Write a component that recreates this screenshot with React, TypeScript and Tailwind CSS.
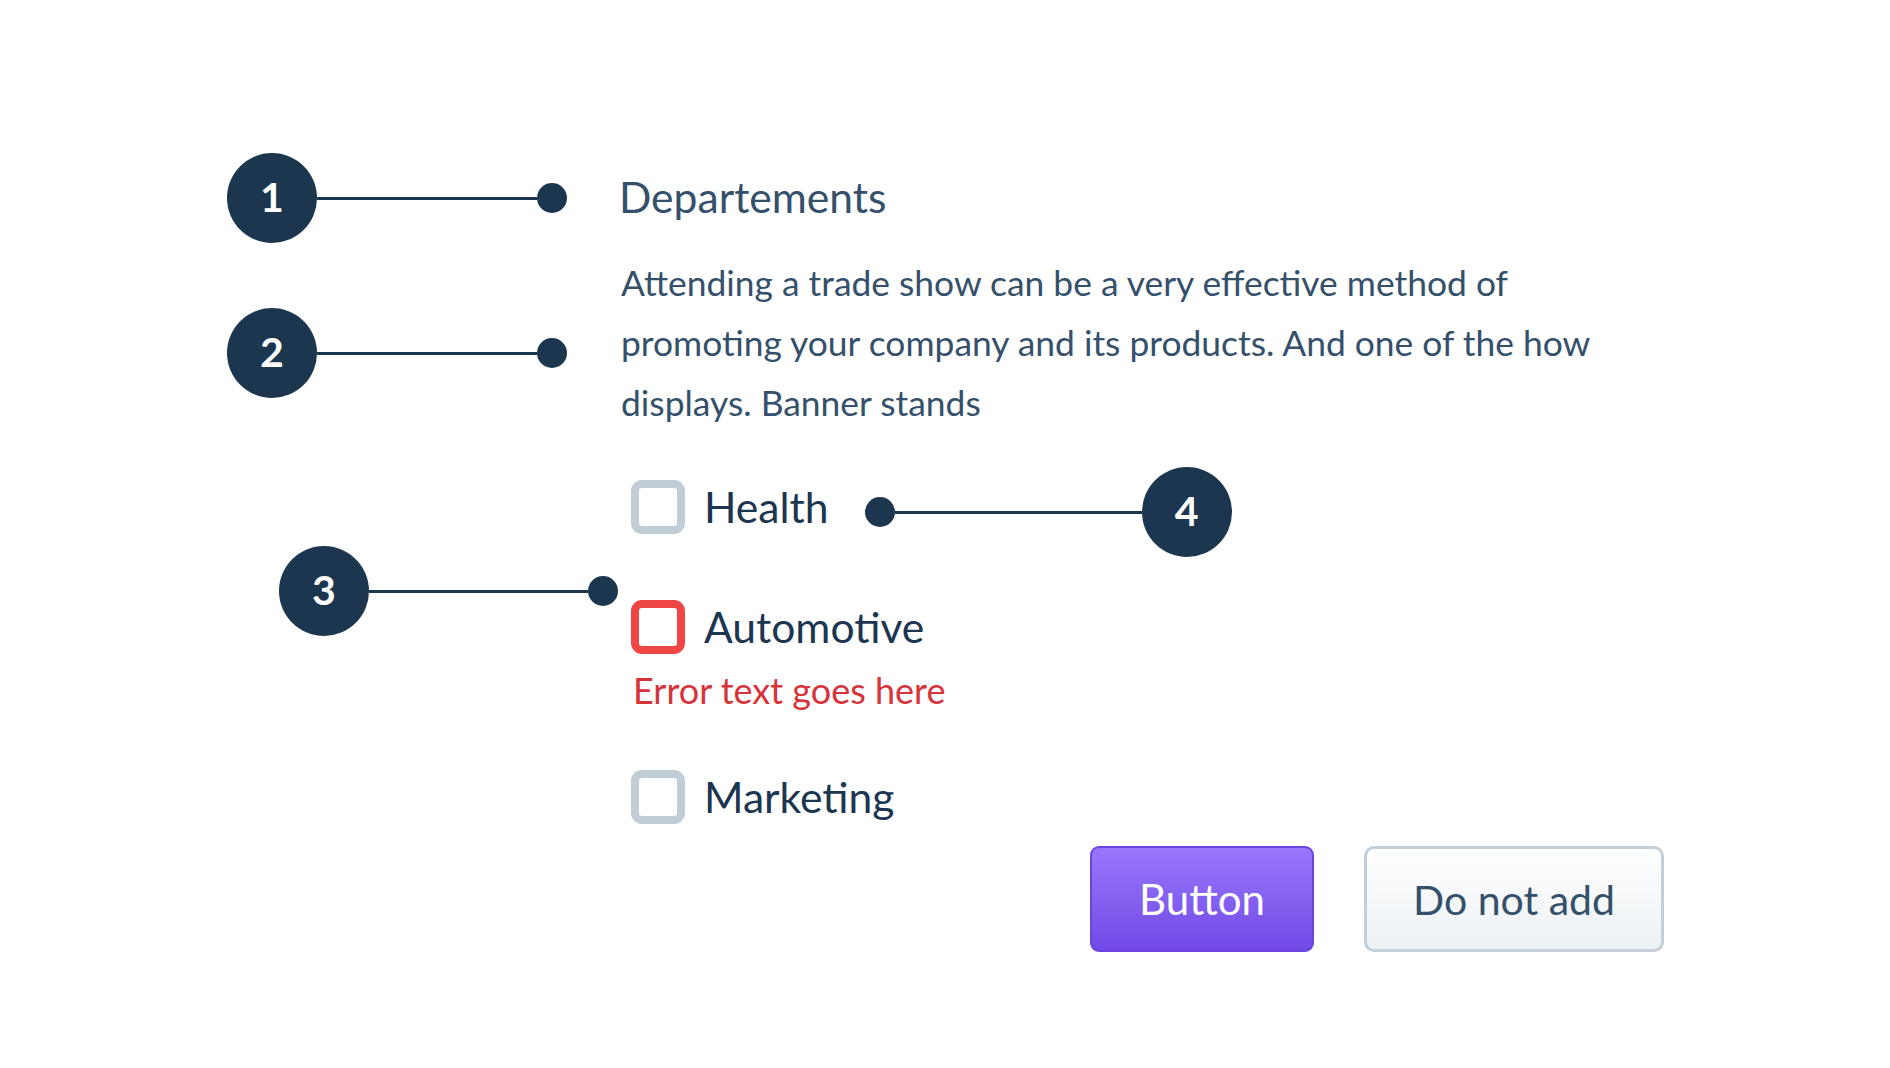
import React from "react";

const NAVY = "bg-[#1c3650]";

function Circle({ n }: { n: number }) {
  return (
    <div className={`w-[90px] h-[90px] shrink-0 rounded-full ${NAVY} flex items-center justify-center pb-[4px] text-white text-[41px] font-bold leading-none`}>
      {n}
    </div>
  );
}

function Dot() {
  return <div className={`w-[30px] h-[30px] shrink-0 rounded-full ${NAVY}`} />;
}

function Line({ w }: { w: string }) {
  return <div className={`${w} h-[3px] shrink-0 ${NAVY}`} />;
}

function Checkbox({ error }: { error?: boolean }) {
  return (
    <div
      className={`w-[54px] h-[54px] shrink-0 rounded-[11px] border-[8px] bg-white ${
        error ? "border-[#f04545]" : "border-[#c0cdd7]"
      }`}
    />
  );
}

export default function App() {
  return (
    <div className="w-[1890px] h-[1068px] bg-white overflow-hidden font-['Lato',sans-serif] pt-[153px]">
      {/* Row 1 */}
      <div className="flex items-center h-[90px] pl-[227px]">
        <Circle n={1} />
        <Line w="w-[220px]" />
        <Dot />
        <h2 className="ml-[52px] mt-[-1px] text-[42.6px] leading-none text-[#34506b] font-normal">Departements</h2>
      </div>

      {/* Row 2 */}
      <div className="flex items-start pl-[227px] mt-[10px]">
        <div className="flex items-center h-[90px] mt-[55px]">
          <Circle n={2} />
          <Line w="w-[220px]" />
          <Dot />
        </div>
        <p className="ml-[54px] w-[1020px] text-[35.4px] leading-[60px] text-[#34506b]">
          Attending a trade show can be a very effective method of promoting your company and its products. And one of the how displays. Banner stands
        </p>
      </div>

      {/* Checkbox column */}
      <div className="pl-[631px] mt-[47px] flex flex-col">
        <div className="flex items-center h-[54px]">
          <Checkbox />
          <span className="ml-[19px] text-[42.6px] leading-none text-[#1c3550]">Health</span>
          <div className="flex items-center ml-[36px] mt-[10px]">
            <Dot />
            <Line w="w-[247px]" />
            <Circle n={4} />
          </div>
        </div>

        <div className="relative flex items-center h-[54px] mt-[66px]">
          <div className="absolute left-[-352px] top-[-54px] flex items-center h-[90px]">
            <Circle n={3} />
            <Line w="w-[219px]" />
            <Dot />
          </div>
          <Checkbox error />
          <span className="ml-[19px] text-[42.6px] leading-none text-[#1c3550]">Automotive</span>
        </div>

        <div className="mt-[15px] ml-[2px] text-[36px] leading-[42px] text-[#d6333a]">Error text goes here</div>

        <div className="flex items-center h-[54px] mt-[59px]">
          <Checkbox />
          <span className="ml-[19px] text-[42.6px] leading-none text-[#1c3550]">Marketing</span>
        </div>

        <div className="w-[1033px] flex justify-end gap-[50px] mt-[22px]">
          <button className="w-[224px] h-[106px] rounded-[9px] border-2 border-[#6a45dd] bg-gradient-to-b from-[#9876fb] to-[#7249e6] text-white text-[42px] leading-none">
            Button
          </button>
          <button className="w-[300px] h-[106px] rounded-[10px] border-[3px] border-[#c3cfd8] bg-gradient-to-b from-[#ffffff] to-[#ecf1f4] text-[#34506b] text-[41px] leading-none">
            Do not add
          </button>
        </div>
      </div>
    </div>
  );
}
